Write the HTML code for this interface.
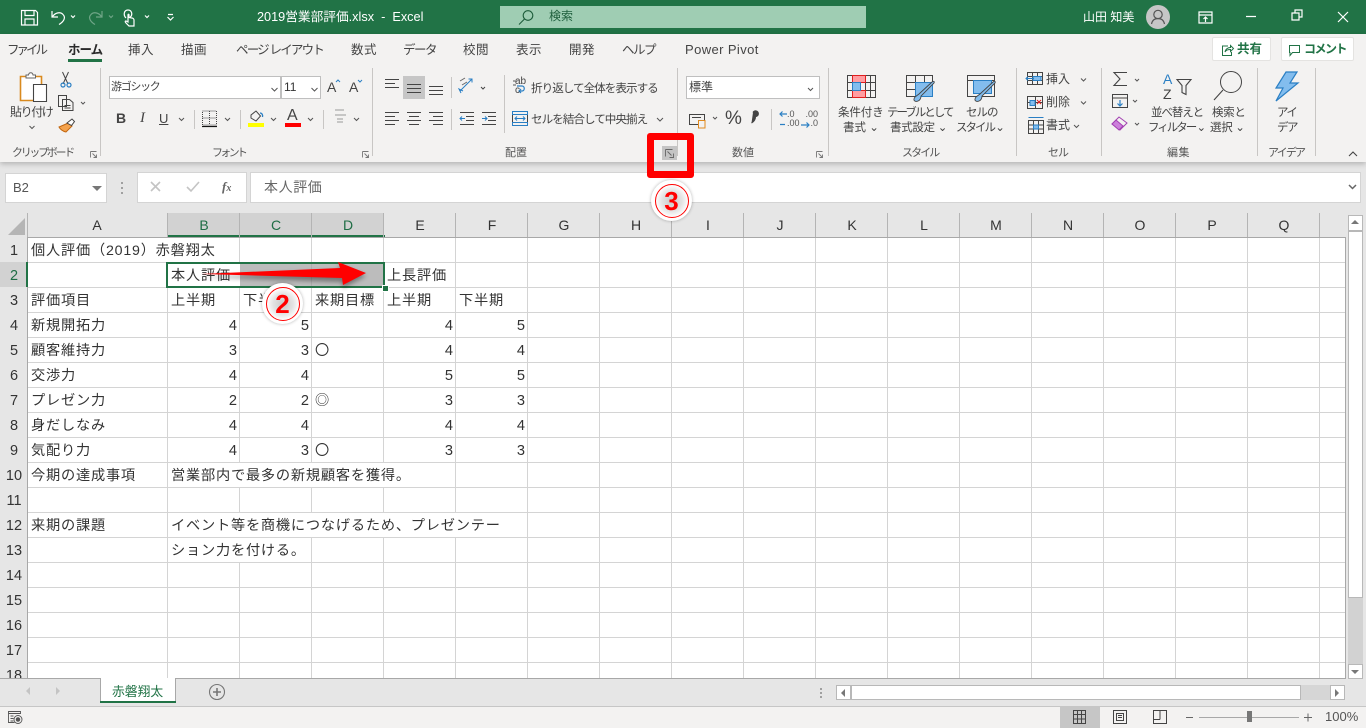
<!DOCTYPE html>
<html lang="ja"><head><meta charset="utf-8"><title>2019営業部評価.xlsx - Excel</title>
<style>
*{box-sizing:border-box}
html,body{margin:0;padding:0;width:1366px;height:728px;overflow:hidden;background:#e6e6e6}
body{position:relative;font-family:"Liberation Sans","Noto Sans CJK JP",sans-serif;color:#444}
.a{position:absolute;white-space:nowrap}
svg{position:absolute;overflow:visible}
.t{font-size:12px;line-height:16px;color:#444}
.tab{position:absolute;top:42px;font-size:12.5px;line-height:16px;color:#444;white-space:nowrap}
.g{position:absolute;top:146px;font-size:11px;line-height:14px;color:#555;white-space:nowrap}
.sep{position:absolute;top:68px;width:1px;height:88px;background:#c8c6c4}
.c{position:absolute;font-size:14.2px;line-height:25px;height:25px;margin-top:2px;color:#333;white-space:nowrap;letter-spacing:.8px}
.n{position:absolute;font-size:14.6px;line-height:25px;height:25px;margin-top:2px;color:#333;width:20px;text-align:right}
.ch{position:absolute;top:213px;height:24px;line-height:25px;font-size:14px;color:#333;text-align:center;width:72px}
.rh{position:absolute;left:0;width:28px;height:25px;line-height:29px;text-align:center;font-size:14.5px;color:#333;overflow:hidden}
.ring{position:absolute;width:34px;height:34px;border-radius:50%;border:1.300px solid #f00;background:radial-gradient(circle,#c9c9c9 0,#e4e4e4 45%,#fff 72%)}
.dig{position:absolute;width:34px;height:34px;line-height:34px;text-align:center;font-size:26px;font-weight:bold;color:#f00}
.halo{position:absolute;width:41px;height:41px;border-radius:50%;background:#fff;box-shadow:0 0 3px rgba(0,0,0,.3)}
</style></head><body>

<!-- title bar -->
<div class="a" style="left:0;top:0;width:1366px;height:34px;background:#217346"></div>
<svg style="left:0;top:0" width="1366" height="34" fill="none" stroke="#fff" stroke-width="1.2">
<path d="M21.500 10.500h14l2 2v12.500h-16z M25 10.500v5h9v-5 M25 25v-6h9v6"/>
<path d="M52 11v6h6 M52.500 16.500c3-4 8-5 10.500-2 3 3 1 7-4 10"/>
<path d="M71 15.500l2 2 2-2"/>
<g stroke="#6fa587"><path d="M102 11v6h-6 M101.500 16.500c-3-4-8-5-10.500-2-3 3-1 7 4 10"/><path d="M109 15.500l2 2 2-2"/></g>
<path d="M126 18c-3-3-2-8 2-8s5 5 2 7.500 M128 15v7l-2-1 c-1 0-1 1 0 2l3 3h5v-6c0-1-1-2-2-2l-3-.5v-2.500c0-1-1-1-1 0z"/>
<path d="M145 15.500l2 2 2-2 M168 14.500h5 M167.500 17l3 3 3-3"/>
<path d="M1199 12h13v11h-13z M1199 15h13 M1205.500 22v-5m-2 2l2-2 2 2"/>
<path d="M1246 16.500h10 M1292 13h7v7h-7z M1295 13v-3h7v7h-3"/>
<path d="M1338 12l10 10 M1348 12l-10 10"/>
</svg>
<div class="a" style="left:257px;top:9px;font-size:12.700px;line-height:16px;color:#fff">2019営業部評価.xlsx &nbsp;-&nbsp; Excel</div>
<div class="a" style="left:500px;top:6px;width:366px;height:22px;background:#9fcdb3"></div>
<svg style="left:516px;top:9px" width="20" height="18" fill="none" stroke="#1d5c3a" stroke-width="1.100"><circle cx="12" cy="6.500" r="4.800"/><path d="M8.500 10l-5.500 5.500"/></svg>
<div class="a" style="left:549px;top:9px;font-size:12px;line-height:15px;color:#1f5f3d">検索</div>
<div class="a" style="left:1083px;top:9px;font-size:12px;line-height:16px;color:#fff">山田 知美</div>
<div class="a" style="left:1146px;top:5px;width:24px;height:24px;border-radius:50%;background:#c6c6c6"></div>
<svg style="left:1146px;top:5px" width="24" height="24" fill="none" stroke="#555" stroke-width="1.200"><circle cx="12" cy="9.500" r="4.200"/><path d="M5.500 19c.8-4 3.500-5.500 6.500-5.500s5.700 1.500 6.500 5.500"/></svg>

<!-- tabs & ribbon -->
<div class="a" style="left:0;top:34px;width:1366px;height:128px;background:#f3f2f1;box-shadow:0 2px 5px rgba(0,0,0,.22)"></div>
<div class="tab" style="left:7px;letter-spacing:-3px">ファイル</div>
<div class="tab" style="left:68px;font-weight:bold;color:#2a2a2a;letter-spacing:-1px">ホーム</div>
<div class="a" style="left:68px;top:59px;width:34px;height:3px;background:#217346"></div>
<div class="tab" style="left:128px;letter-spacing:.5px">挿入</div>
<div class="tab" style="left:181px;letter-spacing:.5px">描画</div>
<div class="tab" style="left:236px;letter-spacing:-1.800px">ページ レイアウト</div>
<div class="tab" style="left:351px;letter-spacing:.5px">数式</div>
<div class="tab" style="left:403px;letter-spacing:-1.500px">データ</div>
<div class="tab" style="left:463px;letter-spacing:.5px">校閲</div>
<div class="tab" style="left:516px;letter-spacing:.5px">表示</div>
<div class="tab" style="left:569px;letter-spacing:.5px">開発</div>
<div class="tab" style="left:622px;letter-spacing:-1.500px">ヘルプ</div>
<div class="tab" style="left:685px;font-size:13px;letter-spacing:.4px">Power Pivot</div>

<div class="a" style="left:1212px;top:37px;width:59px;height:24px;background:#fff;border:1px solid #e4e3e1;border-radius:2px"></div>
<svg style="left:1221px;top:44px" width="14" height="13" fill="none" stroke="#217346" stroke-width="1"><path d="M7 2H1.500v9.500h9V8 M4 8c.5-3 3-4.500 5.500-4.500V1.500l3 3-3 3V5.500C7 5.500 5 6 4 8z"/></svg>
<div class="a" style="left:1237px;top:41px;font-size:12.500px;line-height:16px;font-weight:bold;color:#217346">共有</div>
<div class="a" style="left:1281px;top:37px;width:73px;height:24px;background:#fff;border:1px solid #e4e3e1;border-radius:2px"></div>
<svg style="left:1288px;top:44px" width="14" height="13" fill="none" stroke="#217346" stroke-width="1"><path d="M1.500 1.500h10v7h-7l-2.500 3v-3h-.5z"/></svg>
<div class="a" style="left:1304px;top:41px;font-size:12px;line-height:16px;font-weight:bold;color:#217346;letter-spacing:-1.500px">コメント</div>

<!-- group separators -->
<div class="sep" style="left:100px"></div><div class="sep" style="left:372px"></div><div class="sep" style="left:677px"></div><div class="sep" style="left:828px"></div><div class="sep" style="left:1016px"></div><div class="sep" style="left:1101px"></div><div class="sep" style="left:1257px"></div><div class="sep" style="left:1315px"></div>
<div class="a" style="left:194px;top:110px;width:1px;height:19px;background:#c8c6c4"></div>
<div class="a" style="left:240px;top:110px;width:1px;height:19px;background:#c8c6c4"></div>
<div class="a" style="left:323px;top:110px;width:1px;height:19px;background:#c8c6c4"></div>
<div class="a" style="left:451px;top:77px;width:1px;height:21px;background:#c8c6c4"></div>
<div class="a" style="left:451px;top:109px;width:1px;height:21px;background:#c8c6c4"></div>
<div class="a" style="left:504px;top:75px;width:1px;height:58px;background:#c8c6c4"></div>
<div class="a" style="left:771px;top:109px;width:1px;height:21px;background:#c8c6c4"></div>

<!-- clipboard -->
<svg style="left:0;top:68px" width="100" height="70" fill="none">
<path d="M20.500 8.500h21v24h-21z" fill="#fff" stroke="#d98a1f" stroke-width="1.600"/>
<path d="M26 10v-3h2.500c.5-3 4-3 4.500 0h2.500v3z" fill="#fff" stroke="#666"/>
<path d="M33.500 16.500h13v17h-13z" fill="#fff" stroke="#444" stroke-width="1.100"/>
<path d="M29.500 58l2.500 2.500 2.500-2.500" stroke="#555"/>
<path d="M62.500 4l5.500 12 M68.500 4l-5.500 12" stroke="#444"/><circle cx="63" cy="17" r="2" stroke="#2a7fc4" stroke-width="1.200"/><circle cx="69" cy="17" r="2" stroke="#2a7fc4" stroke-width="1.200"/>
<path d="M58.500 27.500h8v11h-8z M62.500 31.500h7l3.500 3v8h-10.500z" fill="#f3f2f1" stroke="#444"/><path d="M64.500 37.500h6 M64.500 40h6" stroke="#444"/>
<path d="M81 34l2 2 2-2" stroke="#555"/>
<path d="M66 56l3-1 3 3-6 6c-3-.5-6-3-7-5z" fill="#f4a24c" stroke="#c2660e"/><path d="M67 55l5-4 2.500 2.500-3 4z" fill="#fff" stroke="#444"/>
</svg>
<div class="a t" style="left:10px;top:104px;letter-spacing:-1.400px;font-size:12px">貼り付け</div>
<div class="g" style="left:12px;letter-spacing:-2.300px">クリップボード</div>
<svg style="left:0;top:148px" width="1366" height="12" fill="none" stroke="#777" stroke-width=".9">
<path d="M90.500 3.500h6M90.500 3.500v6M92.500 5.500l3.500 3.500M96.500 6.500v3h-3"/>
<path d="M362.500 3.500h6M362.500 3.500v6M364.500 5.500l3.500 3.500M368.500 6.500v3h-3"/>
<path d="M816.500 3.500h6M816.500 3.500v6M818.500 5.500l3.500 3.500M822.500 6.500v3h-3"/>
<path d="M1349 8l4-4 4 4" stroke="#444" stroke-width="1.100"/>
</svg>

<!-- font -->
<div class="a" style="left:109px;top:76px;width:172px;height:23px;background:#fff;border:1px solid #bfbfbf"></div>
<div class="a" style="left:281px;top:76px;width:40px;height:23px;background:#fff;border:1px solid #bfbfbf"></div>
<div class="a" style="left:111px;top:80px;font-size:11px;line-height:15px;color:#444;letter-spacing:-1.300px">游ゴシック</div>
<div class="a" style="left:284px;top:80px;font-size:12px;line-height:15px;color:#333">11</div>
<div class="a" style="left:327px;top:79px;font-size:14px;line-height:17px;color:#444">A</div>
<div class="a" style="left:349px;top:79px;font-size:14px;line-height:17px;color:#444">A</div>
<svg style="left:0;top:68px" width="372" height="70" fill="none" stroke="#555" stroke-width="1">
<path d="M271.500 20l3 3 3-3 M311.500 20l3 3 3-3"/>
<path d="M336 14l2-2 2 2" stroke="#2a7fc4"/><path d="M358 12l2 2 2-2" stroke="#2a7fc4"/>
<path d="M179 50l2.500 2.500 2.500-2.500 M225 50l2.500 2.500 2.500-2.500 M271 50l2.500 2.500 2.500-2.500 M308 50l2.500 2.500 2.500-2.500 M354 50l2.500 2.500 2.500-2.500"/>
<path d="M202.500 43h14v14h-14z M209.500 43v14 M202.500 50h14" stroke="#444" stroke-dasharray="1 1"/><path d="M202 58.500h15" stroke="#111" stroke-width="1.200"/>
<path d="M251 47l5-4 4.500 5-4.500 5-5-3z" stroke="#444"/><path d="M260 45c2 0 3 2 2.500 4" stroke="#2a7fc4" stroke-width="1.300"/>
<path d="M335 47h11 M335 42h9 M337 51h6 M337 54h6" stroke="#999"/>
</svg>
<div class="a" style="left:248px;top:123px;width:16px;height:4px;background:#ffff00"></div>
<div class="a" style="left:285px;top:123px;width:16px;height:4px;background:#ff0000"></div>
<div class="a" style="left:116px;top:110px;font-size:14px;line-height:17px;font-weight:bold;color:#444">B</div>
<div class="a" style="left:140px;top:110px;font-family:'Liberation Serif',serif;font-style:italic;font-size:15px;line-height:17px;color:#444">I</div>
<div class="a" style="left:159px;top:110px;font-size:13px;line-height:17px;color:#444;text-decoration:underline">U</div>
<div class="a" style="left:287px;top:107px;font-size:16px;line-height:18px;color:#444">A</div>
<div class="g" style="left:212px;letter-spacing:-2.700px">フォント</div>

<!-- alignment -->
<div class="a" style="left:403px;top:76px;width:22px;height:23px;background:#c6c6c6"></div>
<svg style="left:370px;top:68px" width="310" height="70" fill="none" stroke="#444" stroke-width="1">
<path d="M15 11.500h14 M15 15.500h10 M15 19.500h14" />
<path d="M37 16.500h14 M37 20.500h14 M37 24.500h14" />
<path d="M59 18.500h14 M59 22.500h14 M59 26.500h14"/>
<path d="M15 44.500h14 M15 48.500h10 M15 52.500h14 M15 56.500h10 M37 44.500h14 M39 48.500h10 M37 52.500h14 M39 56.500h10 M59 44.500h14 M63 48.500h10 M59 52.500h14 M63 56.500h10"/>
<path d="M90 44.500h14 M96 48.500h8 M96 52.500h8 M90 56.500h14 M112 44.500h14 M118 48.500h8 M118 52.500h8 M112 56.500h14"/>
<path d="M95 50.500h-5m2-2l-2 2 2 2 M112 50.500h5m-2-2l2 2-2 2" stroke="#2a7fc4"/>
<path d="M91 25l-2-4 4 2 M90 23l12-12m-3.500 0h3.500v3.500" stroke="#2a7fc4"/>
<path d="M90 13l5-3 M92 17l5-3" stroke="#666"/>
<path d="M111 19l2 2 2-2"/>
<path d="M143 13h4 M143 17h3" stroke="#555"/>
<path d="M147 18h5c3 0 3 5 0 5h-3m2-2l-2 2 2 2" stroke="#2a7fc4" stroke-width="1.200"/>
<path d="M142.500 43.500h15v14h-15z"/><path d="M142.500 43.500h15v3h-15z M142.500 54.500h15v3h-15z" stroke="#2a7fc4"/><path d="M145 50.500h10m-8-2l-2 2 2 2m6-4l2 2-2 2" stroke="#2a7fc4"/>
</svg>
<div class="a" style="left:515px;top:77px;font-size:10px;line-height:10px;color:#444">ab</div>
<div class="a" style="left:515px;top:86px;font-size:10px;line-height:10px;color:#444">c</div>
<div class="a t" style="left:531px;top:81px;font-size:11.600px;letter-spacing:-1px">折り返して全体を表示する</div>
<div class="a t" style="left:531px;top:112px;font-size:11.600px;letter-spacing:-1px">セルを結合して中央揃え</div>
<svg style="left:656px;top:117px" width="10" height="8" fill="none" stroke="#555"><path d="M1 1l3 3 3-3"/></svg>
<div class="g" style="left:505px">配置</div>
<div class="a" style="left:662px;top:146px;width:15px;height:14px;background:#c4c4c4"></div>
<svg style="left:662px;top:148px" width="16" height="12" fill="none" stroke="#666" stroke-width=".9"><path d="M3.500 1.500h7M3.500 1.500v7M5.500 3.500l4 4M11.500 5.500v4h-4"/></svg>

<!-- number -->
<div class="a" style="left:686px;top:76px;width:134px;height:23px;background:#fff;border:1px solid #bfbfbf"></div>
<div class="a" style="left:689px;top:80px;font-size:12px;line-height:15px;color:#444">標準</div>
<svg style="left:680px;top:68px" width="150" height="70" fill="none" stroke="#444">
<path d="M128 20l2.500 2.500 2.500-2.500" stroke="#555"/>
<path d="M9.500 46.500h15v10h-15z M12 49.500h9"/><path d="M18.500 52.500h6.500v7.500h-6.500z" stroke="#e08a1e" fill="#f3f2f1"/>
<path d="M33 49l2 2 2-2" stroke="#555"/>
<path d="M73 44.500a2.800 2.800 0 1 1 2.500 4c0 3-1.500 5-4 6.500" fill="#444" stroke="#444" stroke-width="1.200"/>
</svg>
<div class="a" style="left:725px;top:108px;font-size:19px;line-height:22px;color:#444">%</div>
<div class="a" style="left:787px;top:110px;font-size:9px;line-height:9px;color:#555">.0<br>.00</div>
<div class="a" style="left:800px;top:110px;font-size:9px;line-height:9px;color:#555;text-align:right;width:18px">.00<br>.0</div>
<svg style="left:778px;top:110px" width="46" height="20" fill="none" stroke="#2a7fc4" stroke-width="1.200"><path d="M9 4H2m2.500-2.500L2 4l2.500 2.500 M2 14.500h5"/><path d="M23 15h8m-2.500-2.500L31 15l-2.500 2.500"/></svg>
<div class="g" style="left:732px">数値</div>

<!-- styles -->
<svg style="left:840px;top:70px" width="170" height="36" fill="none" stroke="#444">
<path d="M7.500 5.500h28v22h-28z M7.500 12.500h28 M7.500 20.500h28 M12.500 5.500v22 M25.500 5.500v22 M30.500 5.500v22"/>
<path d="M12.500 5.500h13v7h-13z M12.500 20.500h13v7h-13z" fill="#ff9da1" stroke="#e01f1f"/><path d="M12.500 12.500h8v8h-8z" fill="#83bdee" stroke="#2a7fc4"/>
<path d="M66.500 5.500h26v21h-26z M66.500 12.500h26 M66.500 19.500h26 M75.500 5.500v21 M84.500 5.500v21"/><path d="M75.500 12.500h17v14h-17z" fill="#83bdee" stroke="#2a7fc4"/>
<path d="M75 27c-3 4 1 5 3 4 3-1 3-5 3-5l13-13c1-2-1-2-2-1l-13 12z" fill="#83bdee" stroke="#444" stroke-width=".9"/>
<path d="M127.500 5.500h27v21h-27z M127.500 10.500h27"/><path d="M133.500 10.500h18v13h-18z" fill="#83bdee" stroke="#2a7fc4"/>
<path d="M136 27c-3 4 1 5 3 4 3-1 3-5 3-5l13-13c1-2-1-2-2-1l-13 12z" fill="#83bdee" stroke="#444" stroke-width=".9"/>
</svg>
<div class="a t" style="left:838px;top:105px;letter-spacing:-.1px;font-size:11.500px">条件付き</div>
<div class="a t" style="left:843px;top:120px;font-size:11.500px">書式 ⌄</div>
<div class="a t" style="left:887px;top:105px;letter-spacing:-2px;font-size:11.500px">テーブルとして</div>
<div class="a t" style="left:890px;top:120px;font-size:11.500px;letter-spacing:-.3px">書式設定 ⌄</div>
<div class="a t" style="left:966px;top:105px;font-size:11.500px;letter-spacing:-1px">セルの</div>
<div class="a t" style="left:956px;top:120px;font-size:11.500px;letter-spacing:-2px">スタイル ⌄</div>
<div class="g" style="left:902px;letter-spacing:-1.900px">スタイル</div>

<!-- cells -->
<svg style="left:1025px;top:70px" width="40" height="66" fill="none" stroke="#444">
<path d="M2.500 2.500h15v12h-15z M2.500 6.500h15 M2.500 10.500h15 M7.500 2.500v12 M12.500 2.500v12"/><path d="M8 6.500h8v4h-8z" fill="#83bdee" stroke="#2a7fc4"/><path d="M9 8.500H1m2-2l-2 2 2 2" stroke="#2a7fc4"/>
<path d="M2.500 26.500h15v12h-15z M2.500 32.500h15 M10.500 26.500v12"/><path d="M5 30.500h5v5H5z" fill="#83bdee" stroke="#2a7fc4"/><path d="M12 30l4 4m0-4l-4 4" stroke="#e01f1f"/>
<path d="M3.500 50.500h15v13h-15z M3.500 55h15 M3.500 59h15 M8.500 50.500v13 M13.500 50.500v13"/><path d="M8.500 55h5v4h-5z" fill="#83bdee" stroke="#2a7fc4"/><path d="M3.500 47.500h15" stroke="#2a7fc4"/>
</svg>
<div class="a t" style="left:1046px;top:71px;font-size:12px">挿入</div>
<div class="a t" style="left:1046px;top:94px;font-size:12px">削除</div>
<div class="a t" style="left:1046px;top:117px;font-size:12px">書式</div>
<svg style="left:1060px;top:70px" width="30" height="60" fill="none" stroke="#555"><path d="M21 8.500l2.500 2.500 2.500-2.500 M21 31.500l2.500 2.500 2.500-2.500 M14 55l2.500 2.500 2.500-2.500"/></svg>
<div class="g" style="left:1048px;letter-spacing:-1px">セル</div>

<!-- editing -->
<svg style="left:1100px;top:68px" width="136" height="70" fill="none" stroke="#444">
<path d="M27 4.500H14l6 6.500-6 6.500h13" stroke-width="1.100"/>
<path d="M35 11l2 2 2-2 M33 32l2 2 2-2 M35 55l2 2 2-2" stroke="#555"/>
<path d="M12.500 26.500h15v13h-15z M12.500 30h15"/><path d="M20 32v6m-2.500-2.500l2.500 2.500 2.500-2.500" stroke="#2a7fc4" stroke-width="1.200"/>
<path d="M12 56l7-7 8 6-7 7z" fill="#f3f2f1" stroke="#a23fb2"/><path d="M12 56l4-4 7 6-4 4z" fill="#cc7fdb" stroke="#a23fb2"/>
<path d="M77 11.500h14l-5 6v9l-4-2v-7z" stroke-width="1.100"/>
<circle cx="131" cy="14" r="10.500" stroke="#444"/><path d="M123 22l-9 10" stroke-width="1.100"/>
</svg>
<div class="a" style="left:1163px;top:72px;font-size:14px;line-height:14px;color:#2a7fc4">A</div>
<div class="a" style="left:1163px;top:87px;font-size:14px;line-height:14px;color:#444">Z</div>
<div class="a t" style="left:1151px;top:105px;font-size:11.500px;letter-spacing:-1.100px">並べ替えと</div>
<div class="a t" style="left:1148px;top:120px;font-size:11.500px;letter-spacing:-2px">フィルター ⌄</div>
<div class="a t" style="left:1212px;top:105px;font-size:11.500px;letter-spacing:-.3px">検索と</div>
<div class="a t" style="left:1210px;top:120px;font-size:11.500px;letter-spacing:-.3px">選択 ⌄</div>
<div class="g" style="left:1167px;letter-spacing:.5px">編集</div>

<!-- ideas -->
<svg style="left:1272px;top:70px" width="30" height="34" fill="none"><path d="M14 2h11l-7 11h8L4 31l7-13H4z" fill="#83bdee" stroke="#2a7fc4" stroke-width="1.200"/></svg>
<div class="a t" style="left:1277px;top:105px;font-size:11.500px;letter-spacing:-1.500px">アイ</div>
<div class="a t" style="left:1277px;top:120px;font-size:11.500px;letter-spacing:-1.500px">デア</div>
<div class="g" style="left:1268px;letter-spacing:-1.800px">アイデア</div>

<!-- formula bar -->
<div class="a" style="left:5px;top:173px;width:102px;height:30px;background:#fff;border:1px solid #d4d4d4"></div>
<div class="a" style="left:13px;top:180px;font-size:13px;line-height:16px;color:#555">B2</div>
<div class="a" style="left:92px;top:186px;width:0;height:0;border:5px solid transparent;border-top:5px solid #777"></div>
<div class="a" style="left:121px;top:182px;width:2px;height:2px;background:#a0a0a0;box-shadow:0 5px #a0a0a0,0 10px #a0a0a0"></div>
<div class="a" style="left:137px;top:172px;width:110px;height:31px;background:#fff;border:1px solid #d4d4d4"></div>
<svg style="left:137px;top:172px" width="110" height="31" fill="none" stroke="#c4c4c4" stroke-width="1.600"><path d="M14 10l9 9m0-9l-9 9 M50 15l4 4 8-9"/></svg>
<div class="a" style="left:222px;top:178px;font-family:'Liberation Serif',serif;font-style:italic;font-size:13px;line-height:17px;font-weight:bold;color:#666">f<span style="font-size:10px">x</span></div>
<div class="a" style="left:250px;top:172px;width:1111px;height:31px;background:#fff;border:1px solid #d4d4d4"></div>
<div class="a" style="left:264px;top:179px;font-size:14px;line-height:16px;color:#666;letter-spacing:.6px">本人評価</div>
<svg style="left:1348px;top:184px" width="10" height="7" fill="none" stroke="#666" stroke-width="1.500"><path d="M1 1l3.500 3.500L8 1"/></svg>

<!-- headers -->
<div class="a" style="left:168px;top:213px;width:216px;height:24px;background:#d2d2d2"></div>
<div class="a" style="left:167px;top:235px;width:218px;height:2px;background:#217346"></div>
<svg style="left:0;top:213px" width="1346" height="25" stroke="#b4b4b4" fill="none">
<path d="M27.500 0v24 M167.500 0v24 M239.500 0v24 M311.500 0v24 M383.500 0v24 M455.500 0v24 M527.500 0v24 M599.500 0v24 M671.500 0v24 M743.500 0v24 M815.500 0v24 M887.500 0v24 M959.500 0v24 M1031.500 0v24 M1103.500 0v24 M1175.500 0v24 M1247.500 0v24 M1319.500 0v24"/>
<path d="M8 22L25 5v17z" fill="#b5b5b5" stroke="none"/>
</svg>
<div class="ch" style="left:61px">A</div><div class="ch" style="left:168px;color:#1f6d45">B</div><div class="ch" style="left:240px;color:#1f6d45">C</div><div class="ch" style="left:312px;color:#1f6d45">D</div><div class="ch" style="left:384px">E</div><div class="ch" style="left:456px">F</div><div class="ch" style="left:528px">G</div><div class="ch" style="left:600px">H</div><div class="ch" style="left:672px">I</div><div class="ch" style="left:744px">J</div><div class="ch" style="left:816px">K</div><div class="ch" style="left:888px">L</div><div class="ch" style="left:960px">M</div><div class="ch" style="left:1032px">N</div><div class="ch" style="left:1104px">O</div><div class="ch" style="left:1176px">P</div><div class="ch" style="left:1248px">Q</div>

<div class="a" style="left:0;top:262px;width:28px;height:25px;background:#d2d2d2"></div>
<div class="rh" style="top:237px">1</div><div class="rh" style="top:262px;color:#1f6d45">2</div><div class="rh" style="top:287px">3</div><div class="rh" style="top:312px">4</div><div class="rh" style="top:337px">5</div><div class="rh" style="top:362px">6</div><div class="rh" style="top:387px">7</div><div class="rh" style="top:412px">8</div><div class="rh" style="top:437px">9</div><div class="rh" style="top:462px">10</div><div class="rh" style="top:487px">11</div><div class="rh" style="top:512px">12</div><div class="rh" style="top:537px">13</div><div class="rh" style="top:562px">14</div><div class="rh" style="top:587px">15</div><div class="rh" style="top:612px">16</div><div class="rh" style="top:637px">17</div><div class="rh" style="top:662px;height:16px">18</div>

<!-- grid -->
<div class="a" style="left:28px;top:237px;width:1317px;height:441px;background:#fff"></div>
<div class="a" style="left:167px;top:237px;width:1178px;height:441px;background:linear-gradient(to right,#d4d4d4 1px,transparent 1px) 0 0/72px 100% repeat-x"></div>
<div class="a" style="left:28px;top:262px;width:1317px;height:416px;background:linear-gradient(to bottom,#d4d4d4 1px,transparent 1px) 0 0/100% 25px repeat-y"></div>
<div class="a" style="left:27px;top:237px;width:1px;height:441px;background:#a8a8a8"></div>
<div class="a" style="left:1345px;top:237px;width:1px;height:441px;background:#a8a8a8"></div>
<div class="a" style="left:28px;top:237px;width:1317px;height:1px;background:#a8a8a8"></div>
<div class="a" style="left:0;top:678px;width:1346px;height:1px;background:#a8a8a8"></div>
<div class="a" style="left:26px;top:262px;width:2px;height:25px;background:#217346"></div>
<!-- erase gridlines under overflow text -->
<div class="a" style="left:167px;top:238px;width:1px;height:24px;background:#fff"></div>
<div class="a" style="left:168px;top:263px;width:215px;height:24px;background:#fff"></div>
<div class="a" style="left:168px;top:463px;width:287px;height:24px;background:#fff"></div>
<div class="a" style="left:168px;top:513px;width:359px;height:24px;background:#fff"></div>
<div class="a" style="left:168px;top:538px;width:143px;height:24px;background:#fff"></div>

<div class="c" style="left:31px;top:237px">個人評価（2019）赤磐翔太</div>
<div class="c" style="left:171px;top:262px">本人評価</div><div class="c" style="left:387px;top:262px">上長評価</div>
<div class="c" style="left:31px;top:287px">評価項目</div><div class="c" style="left:171px;top:287px">上半期</div><div class="c" style="left:243px;top:287px">下半期</div><div class="c" style="left:315px;top:287px">来期目標</div><div class="c" style="left:387px;top:287px">上半期</div><div class="c" style="left:459px;top:287px">下半期</div>
<div class="c" style="left:31px;top:312px">新規開拓力</div><div class="c" style="left:31px;top:337px">顧客維持力</div><div class="c" style="left:31px;top:362px">交渉力</div><div class="c" style="left:31px;top:387px">プレゼン力</div><div class="c" style="left:31px;top:412px">身だしなみ</div><div class="c" style="left:31px;top:437px">気配り力</div><div class="c" style="left:31px;top:462px">今期の達成事項</div><div class="c" style="left:31px;top:512px">来期の課題</div>
<div class="c" style="left:171px;top:462px">営業部内で最多の新規顧客を獲得。</div>
<div class="c" style="left:171px;top:512px">イベント等を商機につなげるため、プレゼンテー</div>
<div class="c" style="left:171px;top:537px">ション力を付ける。</div>
<div class="c" style="left:315px;top:337px">〇</div><div class="c" style="left:315px;top:387px">◎</div><div class="c" style="left:315px;top:437px">〇</div>

<div class="n" style="left:217px;top:312px">4</div><div class="n" style="left:289px;top:312px">5</div><div class="n" style="left:433px;top:312px">4</div><div class="n" style="left:505px;top:312px">5</div>
<div class="n" style="left:217px;top:337px">3</div><div class="n" style="left:289px;top:337px">3</div><div class="n" style="left:433px;top:337px">4</div><div class="n" style="left:505px;top:337px">4</div>
<div class="n" style="left:217px;top:362px">4</div><div class="n" style="left:289px;top:362px">4</div><div class="n" style="left:433px;top:362px">5</div><div class="n" style="left:505px;top:362px">5</div>
<div class="n" style="left:217px;top:387px">2</div><div class="n" style="left:289px;top:387px">2</div><div class="n" style="left:433px;top:387px">3</div><div class="n" style="left:505px;top:387px">3</div>
<div class="n" style="left:217px;top:412px">4</div><div class="n" style="left:289px;top:412px">4</div><div class="n" style="left:433px;top:412px">4</div><div class="n" style="left:505px;top:412px">4</div>
<div class="n" style="left:217px;top:437px">4</div><div class="n" style="left:289px;top:437px">3</div><div class="n" style="left:433px;top:437px">3</div><div class="n" style="left:505px;top:437px">3</div>

<!-- selection -->
<div class="a" style="left:240px;top:264px;width:143px;height:22px;background:#bcbcbc"></div>
<div class="a" style="left:311px;top:264px;width:1px;height:22px;background:#adadad"></div>
<div class="a" style="left:166px;top:262px;width:219px;height:26px;border:2px solid #217346"></div>
<div class="a" style="left:382px;top:285px;background:#217346;border:1px solid #fff;box-sizing:content-box;width:5px;height:5px"></div>

<!-- arrow annotation -->
<svg style="left:190px;top:255px" width="200" height="45">
<defs><filter id="sh" x="-10%" y="-50%" width="120%" height="220%"><feGaussianBlur stdDeviation="2.500"/></filter></defs>
<path d="M11 20L150 14 148 8 176 19 153 31 152 25z" fill="#000" opacity=".38" filter="url(#sh)" transform="translate(0,2)"/>
<path d="M11 19L150 13 148 7 176 18 153 30 152 23z" fill="#ff0000"/>
</svg>

<!-- number 2 -->
<div class="halo" style="left:262px;top:283px"></div>
<div class="ring" style="left:265.500px;top:286.500px"></div>
<div class="dig" style="left:265.500px;top:286.500px">2</div>

<!-- red box & number 3 -->
<div class="a" style="left:647px;top:133px;width:47px;height:45px;border:7px solid #f00;border-radius:3px"></div>
<div class="halo" style="left:651px;top:180px"></div>
<div class="ring" style="left:654.500px;top:183.500px"></div>
<div class="dig" style="left:654.500px;top:183.500px">3</div>

<!-- vertical scrollbar -->
<div class="a" style="left:1346px;top:213px;width:20px;height:465px;background:#e6e6e6"></div>
<div class="a" style="left:1348px;top:215px;width:15px;height:16px;background:#fff;border:1px solid #b8b8b8"></div>
<div class="a" style="left:1351px;top:220px;width:0;height:0;border:4px solid transparent;border-bottom:4px solid #777;border-top:0"></div>
<div class="a" style="left:1348px;top:231px;width:15px;height:367px;background:#fff;border:1px solid #b8b8b8"></div>
<div class="a" style="left:1348px;top:598px;width:15px;height:66px;background:#d2d2d2"></div>
<div class="a" style="left:1348px;top:664px;width:15px;height:15px;background:#fff;border:1px solid #b8b8b8"></div>
<div class="a" style="left:1351px;top:670px;width:0;height:0;border:4px solid transparent;border-top:4px solid #777;border-bottom:0"></div>

<!-- sheet tabs -->
<div class="a" style="left:0;top:679px;width:1366px;height:27px;background:#e6e6e6"></div>
<div class="a" style="left:0;top:706px;width:1366px;height:1px;background:#c6c6c6"></div>
<div class="a" style="left:100px;top:678px;width:76px;height:24px;background:#fff;border:1px solid #a8a8a8;border-top:0;border-bottom:0"></div>
<div class="a" style="left:100px;top:701px;width:76px;height:2px;background:#217346"></div>
<div class="a" style="left:112px;top:683px;font-size:12.800px;line-height:17px;color:#217346">赤磐翔太</div>
<div class="a" style="left:26px;top:687px;width:0;height:0;border:4px solid transparent;border-right:4px solid #c4c4c4;border-left:0"></div>
<div class="a" style="left:56px;top:687px;width:0;height:0;border:4px solid transparent;border-left:4px solid #c4c4c4;border-right:0"></div>
<svg style="left:208px;top:683px" width="18" height="18" fill="none" stroke="#777" stroke-width="1.100"><circle cx="9" cy="9" r="7.500"/><path d="M9 5v8M5 9h8" stroke-width="1.600"/></svg>
<div class="a" style="left:820px;top:688px;width:2px;height:2px;background:#a0a0a0;box-shadow:0 4px #a0a0a0,0 8px #a0a0a0"></div>

<!-- horizontal scrollbar -->
<div class="a" style="left:836px;top:685px;width:15px;height:15px;background:#fff;border:1px solid #b8b8b8"></div>
<div class="a" style="left:841px;top:689px;width:0;height:0;border:4px solid transparent;border-right:4px solid #777;border-left:0"></div>
<div class="a" style="left:851px;top:685px;width:450px;height:15px;background:#fff;border:1px solid #b8b8b8"></div>
<div class="a" style="left:1301px;top:685px;width:29px;height:15px;background:#d6d6d6"></div>
<div class="a" style="left:1330px;top:685px;width:15px;height:15px;background:#fff;border:1px solid #b8b8b8"></div>
<div class="a" style="left:1335px;top:689px;width:0;height:0;border:4px solid transparent;border-left:4px solid #777;border-right:0"></div>

<!-- status bar -->
<div class="a" style="left:0;top:707px;width:1366px;height:21px;background:#f3f2f1"></div>
<svg style="left:7px;top:710px" width="16" height="15" fill="none" stroke="#555" stroke-width=".9"><path d="M1.500 1.500h12v2h-12z M1.500 3.500v9h6 M3.500 6h3M3.500 8.500h3M3.500 11h3"/><circle cx="11" cy="9.500" r="4"/><circle cx="11" cy="9.500" r="1.800" fill="#555"/></svg>
<div class="a" style="left:1060px;top:707px;width:40px;height:21px;background:#c6c6c6"></div>
<svg style="left:1060px;top:707px" width="306" height="21" fill="none" stroke="#444" stroke-width="1">
<path d="M13.500 3.500h12v13h-12z M13.500 7.500h12 M13.500 12h12 M17.500 3.500v13 M21.500 3.500v13"/>
<path d="M53.500 3.500h13v13h-13z M56.500 6.500h7v7h-7z M58 8.500h4M58 10.500h4"/>
<path d="M93.500 3.500h13v13h-13z M93.500 12.500h6.500 M100 3.500v9"/>
<path d="M126 10.500h7 M244 10.500h8m-4-4v8" stroke="#666"/>
</svg>
<div class="a" style="left:1199px;top:717px;width:100px;height:1px;background:#a8a8a8"></div>
<div class="a" style="left:1247px;top:711px;width:5px;height:11px;background:#777"></div>
<div class="a" style="left:1325px;top:709px;font-size:13px;line-height:16px;color:#555">100%</div>
</body></html>
